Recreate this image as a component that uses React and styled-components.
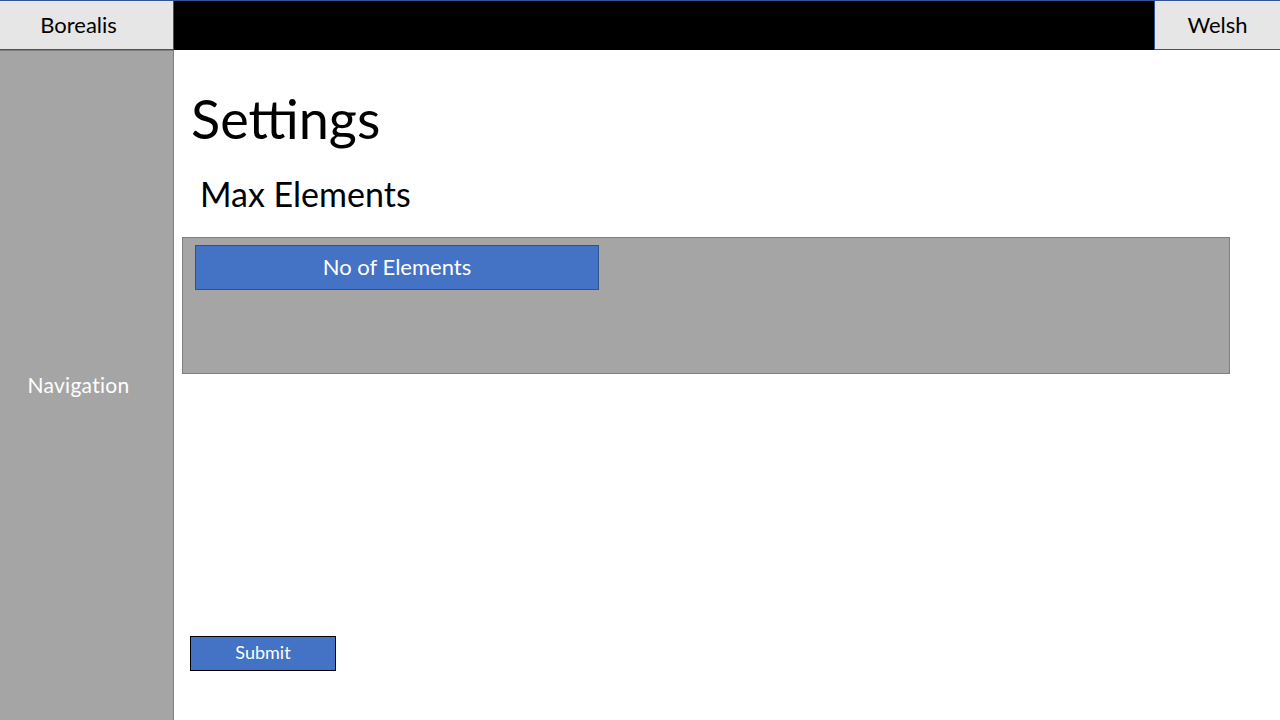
import React from "react";
import styled, { createGlobalStyle } from "styled-components";

const GlobalStyle = createGlobalStyle`
  html, body {
    margin: 0;
    padding: 0;
    background: #ffffff;
    font-family: Lato, "Open Sans", "Liberation Sans", sans-serif;
  }
  * { box-sizing: border-box; }
`;

const Page = styled.div`
  width: 1280px;
  height: 720px;
  display: flex;
  flex-direction: column;
  overflow: hidden;
`;

const TopBar = styled.header`
  height: 50px;
  display: flex;
  background: #000000;
  border-top: 1px solid #2f5597;
`;

const TopTab = styled.div`
  width: ${(p) => p.$width}px;
  display: flex;
  align-items: center;
  justify-content: center;
  padding-bottom: 2px;
  background: #e7e6e6;
  color: #000000;
  font-size: 22px;
  border-bottom: 1px solid #2f5597;
  ${(p) =>
    p.$side === "left"
      ? "border-right: 1px solid #2f5597; padding-right: 16px;"
      : "border-left: 1px solid #2f5597;"}
`;

const Spacer = styled.div`
  flex: 1;
`;

const Body = styled.div`
  flex: 1;
  display: flex;
`;

const Sidebar = styled.nav`
  width: 174px;
  background: #a5a5a5;
  border-right: 1px solid #7f7f7f;
  border-top: 1px solid #7f7f7f;
  display: flex;
  align-items: center;
  justify-content: center;
  padding: 0 16px 2px 0;
  color: #ffffff;
  font-size: 21px;
  letter-spacing: 0.3px;
`;

const Main = styled.main`
  flex: 1;
  display: flex;
  flex-direction: column;
  padding: 0 50px 49px 8px;
`;

const Title = styled.h1`
  margin: 37px 0 0 9px;
  font-size: 54px;
  font-weight: 400;
  line-height: 64px;
`;

const SubTitle = styled.h2`
  margin: 23px 0 0 18px;
  font-size: 34px;
  font-weight: 400;
  line-height: 40px;
`;

const Panel = styled.section`
  margin-top: 23px;
  height: 137px;
  background: #a5a5a5;
  border: 1px solid #7f7f7f;
  padding: 7px 12px;
`;

const FieldLabel = styled.div`
  width: 404px;
  height: 45px;
  background: #4472c4;
  border: 1px solid #2f528f;
  color: #ffffff;
  font-size: 22px;
  display: flex;
  align-items: center;
  justify-content: center;
  padding-bottom: 3px;
`;

const SubmitButton = styled.button`
  margin-top: auto;
  margin-left: 8px;
  width: 146px;
  height: 35px;
  background: #4472c4;
  border: 1px solid #000000;
  color: #ffffff;
  font-family: inherit;
  font-size: 18px;
  padding: 0 0 3px;
  cursor: pointer;
`;

export default function App() {
  return (
    <Page>
      <GlobalStyle />
      <TopBar>
        <TopTab $width={174} $side="left">Borealis</TopTab>
        <Spacer />
        <TopTab $width={126} $side="right">Welsh</TopTab>
      </TopBar>
      <Body>
        <Sidebar>Navigation</Sidebar>
        <Main>
          <Title>Settings</Title>
          <SubTitle>Max Elements</SubTitle>
          <Panel>
            <FieldLabel>No of Elements</FieldLabel>
          </Panel>
          <SubmitButton>Submit</SubmitButton>
        </Main>
      </Body>
    </Page>
  );
}
